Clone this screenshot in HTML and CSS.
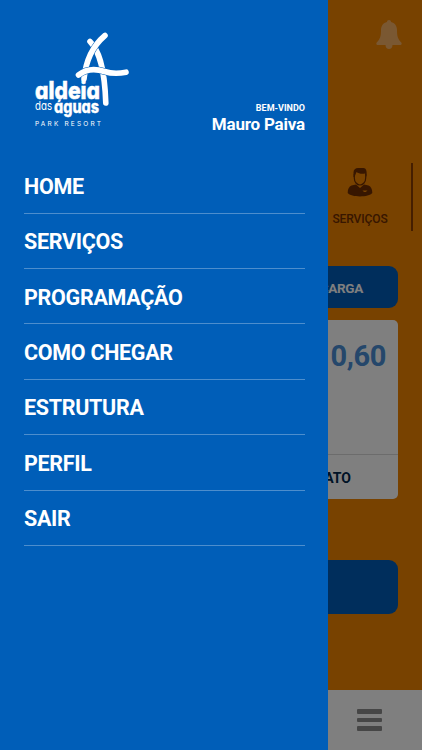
FILE: index.html
```html
<!DOCTYPE html>
<html lang="pt-BR">
<head>
<meta charset="UTF-8" />
<meta name="viewport" content="width=device-width, initial-scale=1" />
<title>Aldeia das Águas</title>
<link rel="stylesheet" href="styles.css">
</head>
<body>
  <div class="app">
    <header class="topbar">
      <svg class="bell" viewBox="0 0 26 30" aria-hidden="true">
        <path d="M13 0c1.300 0 2 .8 2 2 3.800.9 6 3.900 6 8 0 6 .8 9 4.300 12.500.7.700.4 2.500-.8 2.500h-8c0 2.500-1.500 4-3.500 4s-3.500-1.500-3.500-4h-8C.3 25 0 23.200.7 22.500 4.200 19 5 16 5 10c0-4.100 2.200-7.100 6-8 0-1.200.7-2 2-2z" />
      </svg>
    </header>

    <nav class="shortcuts">
      <a class="shortcut">
        <svg class="person" viewBox="0 0 26 30" aria-hidden="true">
          <path class="line" d="M7.300 7v4c0 4 2.700 7 5.700 7s5.700-3 5.700-7V7" />
          <path d="M6.500 10V5.500C6.500 2.500 8.500 1 11 1h5.500c2.500 0 3.800 3 3 9l-1.500-3.500c-3 .7-6.500.2-8.500-1.500L7.500 10z" />
          <path d="M9 17.500l4 3.500 4-3.500 4.500 1C24 19.500 25.300 22 25.300 26c-3.300 4.500-21.300 4.500-24.600 0 0-4 1.300-6.500 3.800-7.500z" />
          <path class="badge" d="M15.500 23.500h5l-1.700 1.500h-1.800z" />
        </svg>
        <span>SERVIÇOS</span>
      </a>
    </nav>

    <main class="content">
      <button class="btn recharge">RECARGA</button>
      <section class="card">
        <p class="balance">0,60</p>
        <a class="statement">EXTRATO</a>
      </section>
      <button class="btn action" aria-label="Abrir"></button>
    </main>

    <footer class="tabbar">
      <div class="burger"><i></i><i></i><i></i></div>
    </footer>
  </div>

  <div class="overlay"></div>

  <aside class="drawer">
    <div class="drawer-head">
      <svg class="logo" viewBox="30 28 102 104" role="img" aria-label="Aldeia das Águas Park Resort">
        <path class="mark" d="M90 41.500c8 8 14.500 23 15.800 61.500" />
        <path class="mark-gap" d="M105 35.500C95 44 86 58 84 79" />
        <path class="mark" d="M105 35.500C95 44 86 58 84 79" />
        <path class="mark-gap" d="M78.500 75c8-6.500 17-6.500 26-3.500 7 2.300 14 2.300 21.500.7" />
        <path class="mark" d="M78.500 75c8-6.500 17-6.500 26-3.500 7 2.300 14 2.300 21.500.7" />
        <text class="name" x="35" y="99" textLength="65" lengthAdjust="spacingAndGlyphs">aldeia</text>
        <text class="das" x="35" y="109.500" textLength="17" lengthAdjust="spacingAndGlyphs">das</text>
        <text class="aguas" x="54" y="112.500" textLength="45" lengthAdjust="spacingAndGlyphs">águas</text>
        <text class="tag" x="35" y="126" textLength="66">PARK RESORT</text>
      </svg>
      <div class="user">
        <span class="welcome">BEM-VINDO</span>
        <strong class="username">Mauro Paiva</strong>
      </div>
    </div>
    <ul class="menu">
      <li>HOME</li>
      <li>SERVIÇOS</li>
      <li>PROGRAMAÇÃO</li>
      <li>COMO CHEGAR</li>
      <li>ESTRUTURA</li>
      <li>PERFIL</li>
      <li>SAIR</li>
    </ul>
  </aside>
</body>
</html>
```
FILE: styles.css
```css
* {
  box-sizing: border-box;
}
body {
  margin: 0;
  font-family: Roboto, "Liberation Sans", sans-serif;
  background: #f08400;
  overflow: hidden;
}
.app {
  height: 750px;
  display: flex;
  flex-direction: column;
}
.topbar {
  height: 163px;
  padding: 20px 20px 0 0;
  display: flex;
  justify-content: flex-end;
}
.bell {
  width: 26px;
  height: 30px;
  fill: #f4b065;
}

/* shortcuts */
.shortcuts {
  height: 68px;
  margin-right: 9px;
  display: flex;
  justify-content: flex-end;
}
.shortcut {
  width: 104px;
  padding-top: 4px;
  border-right: 2px solid #8a3c00;
  display: flex;
  flex-direction: column;
  align-items: center;
  gap: 15px;
  color: #6e2d00;
  font-size: 12px;
  font-weight: 500;
  line-height: 14px;
}
.shortcut span {
  letter-spacing: -0.1px;
}
.person {
  width: 26px;
  height: 30px;
  fill: #6e2d00;
}
.person .line {
  fill: none;
  stroke: #6e2d00;
  stroke-width: 1.2;
}
.person .badge {
  fill: #f08400;
}

/* content */
.content {
  flex: 1;
  padding: 35px 24px 0;
}
.btn {
  display: block;
  width: 100%;
  border: none;
  border-radius: 9px;
  background: #005cb8;
  color: #fff;
  font-family: inherit;
  font-size: 13.5px;
  font-weight: 700;
}
.recharge {
  height: 42px;
  padding: 2px 35px 0 0;
  text-align: right;
  letter-spacing: -0.3px;
}
.card {
  height: 179px;
  margin: 12px 0 61px;
  border-radius: 5px;
  background: #fff;
  display: flex;
  flex-direction: column;
}
.balance {
  flex: 1;
  margin: 0;
  padding: 18px 12px 0 0;
  text-align: right;
  font-size: 29px;
  font-weight: 700;
  line-height: 36px;
  letter-spacing: -0.4px;
  color: #4a8fd6;
}
.statement {
  height: 45px;
  padding-right: 47px;
  border-top: 1px solid #d8d8d8;
  text-align: right;
  font-size: 14px;
  font-weight: 700;
  line-height: 46px;
  color: #00264c;
}
.action {
  height: 54px;
}
.tabbar {
  height: 60px;
  padding-right: 40px;
  background: #fff;
  display: flex;
  align-items: center;
  justify-content: flex-end;
}
.burger {
  display: grid;
  gap: 4px;
}
.burger i {
  width: 25px;
  height: 4.5px;
  border-radius: 1px;
  background: #8c8c8c;
}

.overlay {
  position: absolute;
  inset: 0;
  background: rgba(0,0,0,0.5);
}

/* side menu */
.drawer {
  position: absolute;
  top: 0;
  left: 0;
  width: 328px;
  height: 750px;
  padding: 28px 23px 0 24px;
  background: #005eb8;
  color: #fff;
}
.drawer-head {
  height: 130.2px;
  padding-left: 6px;
  display: flex;
  justify-content: space-between;
}
.logo {
  width: 102px;
  height: 104px;
}
.mark, .mark-gap {
  fill: none;
  stroke: #fff;
  stroke-width: 5.6;
  stroke-linecap: round;
}
.mark-gap {
  stroke: #005eb8;
  stroke-width: 6.6;
}
.logo text {
  fill: #fff;
  font-family: Inter, sans-serif;
  font-feature-settings: "cv11";
}
.logo .name {
  font-size: 24px;
  font-weight: 800;
  stroke: #fff;
  stroke-width: 0.5;
}
.logo .das {
  font-size: 12px;
}
.logo .aguas {
  font-size: 17px;
  font-weight: 800;
  stroke: #fff;
  stroke-width: 0.3;
}
.logo .tag {
  font-size: 6.5px;
}
.user {
  padding-top: 75px;
  display: flex;
  flex-direction: column;
  align-items: flex-end;
}
.welcome {
  font-size: 9px;
  font-weight: 700;
  line-height: 11px;
}
.username {
  font-size: 17px;
  font-weight: 700;
  line-height: 20px;
  letter-spacing: -0.2px;
}
.menu {
  margin: 0;
  padding: 0;
  list-style: none;
}
.menu li {
  height: 55.4px;
  padding-top: 15.6px;
  border-bottom: 1px solid #4d8ecd;
  font-size: 21.5px;
  font-weight: 700;
  line-height: 26px;
  letter-spacing: -0.3px;
}
```
